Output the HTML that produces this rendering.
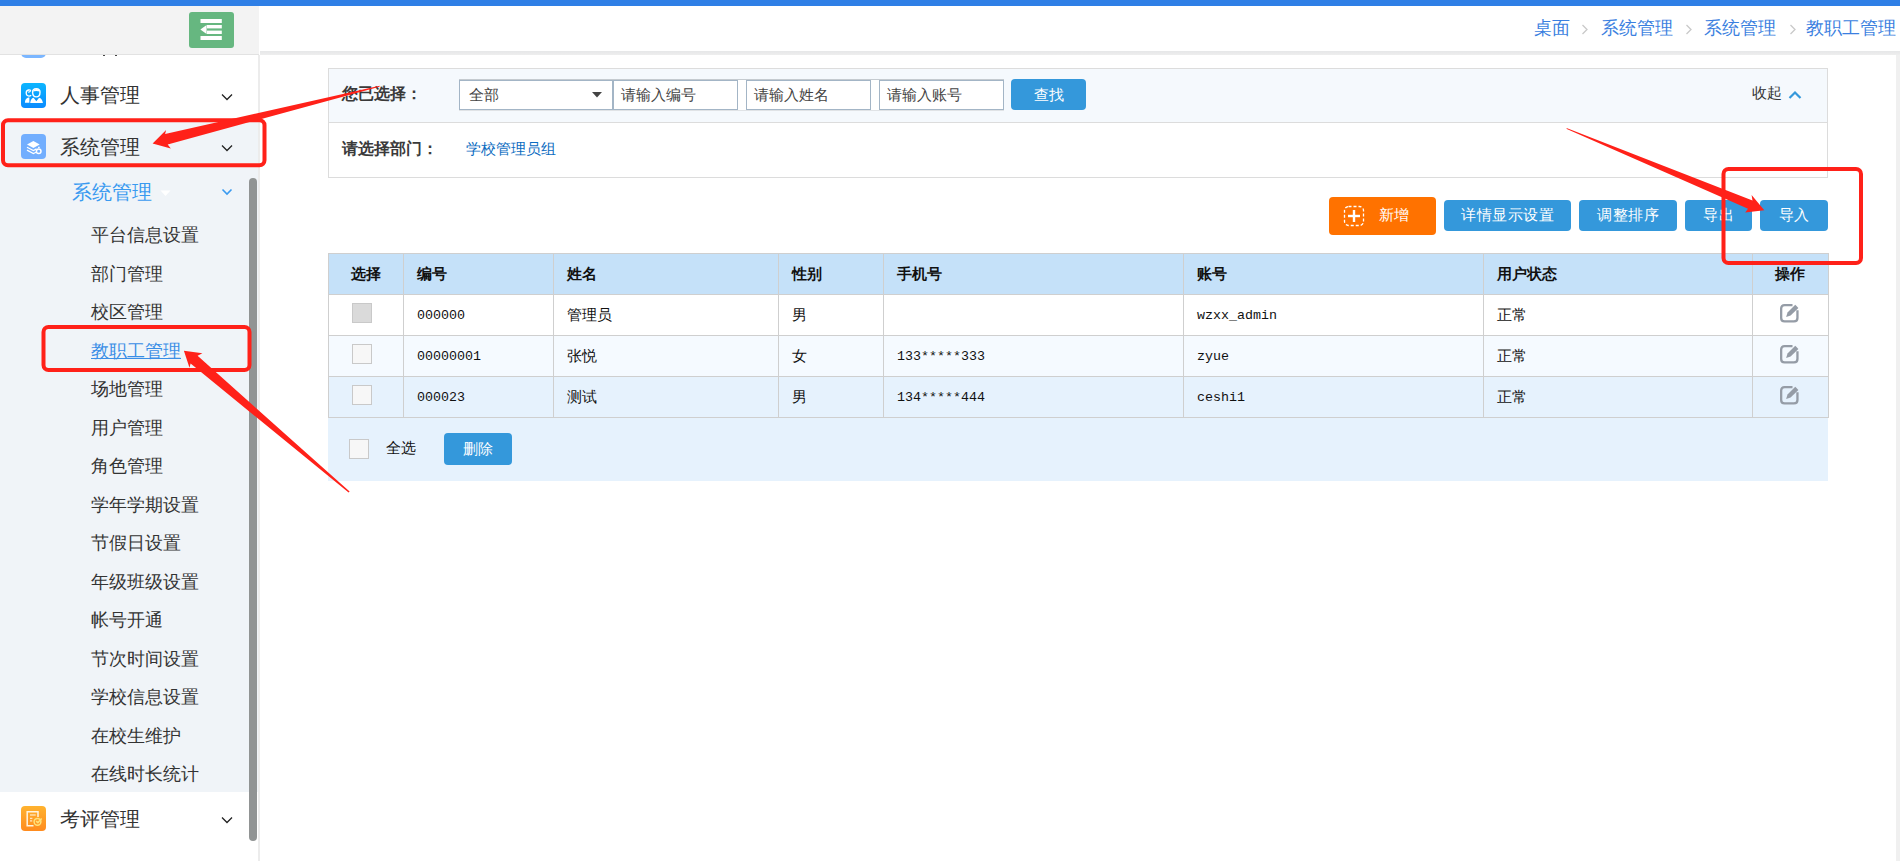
<!DOCTYPE html>
<html><head><meta charset="utf-8">
<style>
*{box-sizing:border-box;margin:0;padding:0}
html,body{width:1900px;height:861px;overflow:hidden;background:#fff;font-family:"Liberation Sans",sans-serif;color:#333}
.a{position:absolute;white-space:nowrap}
#topbar{left:0;top:0;width:1900px;height:6px;background:#2f7fe6}
#sbhead{left:0;top:6px;width:259px;height:49px;background:#f3f3f3;border-bottom:1px solid #e2e2e2}
#greenbtn{left:189px;top:12px;width:45px;height:36px;background:#66b780;border-radius:3px}
#sidebar{left:0;top:55px;width:259px;height:806px;background:#fff;overflow:hidden}
#sbline{left:258px;top:55px;width:2px;height:806px;background:#ececec}
#mainhead{left:260px;top:6px;width:1640px;height:45px;background:#fff}
#mainshadow{left:260px;top:51px;width:1640px;height:4px;background:linear-gradient(#e6e7e8,#eeeeee)}
#rightstrip{left:1896px;top:55px;width:4px;height:806px;background:#f0f0f0}
.crumb{top:16px;font-size:18px;color:#3b7fe0;line-height:24px}
.sep{top:16px;font-size:16px;color:#c8c8c8;line-height:24px}
.icon{width:25px;height:25px;border-radius:5px}
.ptxt{font-size:20px;line-height:26px;color:#333}
.chev{width:12px;height:8px}
.sub{left:91px;font-size:18px;line-height:24px;color:#333}
#filter{left:328px;top:68px;width:1500px;height:110px;border:1px solid #dcdcdc;background:#fff}
#frow1{left:329px;top:69px;width:1498px;height:54px;background:#f5f9fd;border-bottom:1px solid #dcdcdc}
.lbl{font-size:16px;font-weight:bold;color:#3a3a3a;line-height:20px}
.inp{height:30px;background:#fff;border:1px solid #a3b5c6;font-size:15px;color:#444;line-height:28px;padding-left:7px}
.btn{background:#3498db;color:#fff;border-radius:4px;font-size:15px;text-align:center}
#tbl{left:328px;top:253px;width:1500px;border-collapse:collapse;table-layout:fixed;font-size:15px;color:#111}
#tbl td,#tbl th{border:1px solid #cfcfcf;height:41px;padding:0 0 0 13px;text-align:left;white-space:nowrap}
#tbl th{background:#c5e1f9;font-weight:bold}
.mono{font-family:"Liberation Mono",monospace;font-size:13.33px}
.cb{display:inline-block;width:20px;height:20px;border:1px solid #c9c9c9;background:#f7f7f7;vertical-align:middle}
#foot{left:328px;top:418px;width:1500px;height:63px;background:#e6f2fd}
</style></head><body>
<div class="a" id="topbar"></div>
<div class="a" id="sidebar"></div>
<div class="a" style="left:0;top:121px;width:258px;height:671px;background:#f0f4f8"></div>
<div class="a icon" style="left:21px;top:33px;background:#7bb6ff"></div>
<div class="a" style="left:103px;top:53px;width:2px;height:3px;background:#444"></div>
<div class="a" style="left:115px;top:53px;width:2px;height:3px;background:#444"></div>
<div class="a" id="sbhead"></div>
<div class="a" id="greenbtn">
  <svg width="45" height="36" viewBox="0 0 45 36" style="position:absolute;left:0;top:0">
    <rect x="11.5" y="7" width="21.3" height="4" fill="#fff"/>
    <rect x="18" y="13" width="14.8" height="3.4" fill="#fff"/>
    <rect x="18" y="18.6" width="14.8" height="3.4" fill="#fff"/>
    <rect x="11.5" y="24" width="21.3" height="4" fill="#fff"/>
    <polygon points="11.4,17.5 17.6,13 17.6,22" fill="#fff"/>
  </svg>
</div>
<div class="a" id="sbline"></div>
<div class="a" id="mainhead"></div>
<div class="a" id="mainshadow"></div>
<div class="a" id="rightstrip"></div>

<!-- breadcrumb -->
<div class="a crumb" style="left:1534px">桌面</div>
<svg class="a" width="8" height="12" style="left:1581px;top:24px"><polyline points="1.5,1 6,5.5 1.5,10" fill="none" stroke="#c9c9c9" stroke-width="1.3"/></svg>
<div class="a crumb" style="left:1601px">系统管理</div>
<svg class="a" width="8" height="12" style="left:1685px;top:24px"><polyline points="1.5,1 6,5.5 1.5,10" fill="none" stroke="#c9c9c9" stroke-width="1.3"/></svg>
<div class="a crumb" style="left:1704px">系统管理</div>
<svg class="a" width="8" height="12" style="left:1789px;top:24px"><polyline points="1.5,1 6,5.5 1.5,10" fill="none" stroke="#c9c9c9" stroke-width="1.3"/></svg>
<div class="a crumb" style="left:1806px">教职工管理</div>

<!-- sidebar content -->

<div class="a icon" style="left:21px;top:83px;background:linear-gradient(#0cb6ff,#0a8bff);border-radius:4px">
  <svg width="25" height="25" viewBox="0 0 25 25" style="position:absolute;left:0;top:0">
    <path d="M10 7.6 Q8.8 6.8 7.6 7 Q5 7.5 5.2 10.3 Q5.5 13 8 13.1 Q9.3 13.1 10.2 12.3" fill="none" stroke="#fff" stroke-width="1.3"/>
    <path d="M7.2 9 Q8.4 9.4 9.6 8.2" fill="none" stroke="#fff" stroke-width="1.1"/>
    <path d="M11.6 9.2 Q11.3 5.8 15.3 5.8 Q19.2 5.8 19 9.2 Q19 13.8 15.3 13.9 Q11.7 13.8 11.6 9.2 Z" fill="none" stroke="#fff" stroke-width="1.4"/>
    <path d="M11.8 8.6 Q12.5 6 15.3 6 Q18.3 6 18.8 8.6 Q15.3 7.6 11.8 8.6 Z" fill="#fff"/>
    <path d="M3.9 19.8 Q4 15.6 7.3 14.6 L8.4 14.6 L8.4 19.8 Z" fill="#fff"/>
    <path d="M9.2 20 Q9.6 15.4 12.6 14.7 L15.3 18.2 L18.1 14.7 Q21.3 15.4 21.9 20 Z" fill="#fff"/>
  </svg>
</div>
<div class="a ptxt" style="left:60px;top:82px">人事管理</div>
<svg class="a" width="12" height="8" style="left:221px;top:93px"><polyline points="1,1.5 6,6.5 11,1.5" fill="none" stroke="#222" stroke-width="1.3"/></svg>

<div class="a icon" style="left:21px;top:134px;background:#72aefe;border-radius:4px">
  <svg width="25" height="25" viewBox="0 0 25 25" style="position:absolute;left:0;top:0">
    <path d="M6 10.6 L12.4 7 L18.7 10.6 L12.4 14 Z" fill="#fff"/>
    <path d="M6 13.2 L12.4 16.5 L15.5 14.9 M17.1 13.4 L18.7 13.4" fill="none" stroke="#fff" stroke-width="1.2"/>
    <path d="M6 16.1 L12.4 19.5 L15.1 18.3" fill="none" stroke="#fff" stroke-width="1.2"/>
    <circle cx="17.7" cy="17.3" r="2.3" fill="none" stroke="#fff" stroke-width="1.5"/>
  </svg>
</div>
<div class="a ptxt" style="left:60px;top:134px">系统管理</div>
<svg class="a" width="12" height="8" style="left:221px;top:144px"><polyline points="1,1.5 6,6.5 11,1.5" fill="none" stroke="#222" stroke-width="1.3"/></svg>

<div class="a ptxt" style="left:72px;top:179px;color:#3a9af0">系统管理</div>
<svg class="a" width="12" height="7" style="left:160px;top:190px"><polygon points="0.5,0.5 10.5,0.5 5.5,6" fill="#fff"/></svg>
<svg class="a" width="12" height="8" style="left:221px;top:188px"><polyline points="1.5,1.5 6,6 10.5,1.5" fill="none" stroke="#3a9af0" stroke-width="1.6"/></svg>

<div class="a sub" style="top:223px">平台信息设置</div>
<div class="a sub" style="top:262px">部门管理</div>
<div class="a sub" style="top:300px">校区管理</div>
<div class="a sub" style="top:339px;color:#3a8ee6;text-decoration:underline">教职工管理</div>
<div class="a sub" style="top:377px">场地管理</div>
<div class="a sub" style="top:416px">用户管理</div>
<div class="a sub" style="top:454px">角色管理</div>
<div class="a sub" style="top:493px">学年学期设置</div>
<div class="a sub" style="top:531px">节假日设置</div>
<div class="a sub" style="top:570px">年级班级设置</div>
<div class="a sub" style="top:608px">帐号开通</div>
<div class="a sub" style="top:647px">节次时间设置</div>
<div class="a sub" style="top:685px">学校信息设置</div>
<div class="a sub" style="top:724px">在校生维护</div>
<div class="a sub" style="top:762px">在线时长统计</div>

<div class="a icon" style="left:21px;top:806px;background:linear-gradient(#ffb32f,#ff8b1e);border-radius:4px">
  <svg width="25" height="25" viewBox="0 0 25 25" style="position:absolute;left:0;top:0">
    <path d="M12.5 19.7 H6.2 V5.8 H17 V11" fill="none" stroke="#fff4e0" stroke-width="1.5"/>
    <line x1="9" y1="9" x2="14.7" y2="9" stroke="#ffe6c0" stroke-width="1.3"/>
    <line x1="9" y1="12.4" x2="11.4" y2="12.4" stroke="#ffe6c0" stroke-width="1.3"/>
    <line x1="9" y1="14.9" x2="11.2" y2="14.9" stroke="#ffe6c0" stroke-width="1.3"/>
    <circle cx="16.5" cy="15.8" r="3.4" fill="none" stroke="#ffe27a" stroke-width="1.5"/>
    <polyline points="15.1,15.1 16.9,16.6 20.7,12.4" fill="none" stroke="#ffe27a" stroke-width="1.5"/>
  </svg>
</div>
<div class="a ptxt" style="left:60px;top:806px">考评管理</div>
<svg class="a" width="12" height="8" style="left:221px;top:816px"><polyline points="1,1.5 6,6.5 11,1.5" fill="none" stroke="#222" stroke-width="1.3"/></svg>

<div class="a" style="left:249px;top:178px;width:8px;height:663px;background:#919494;border-radius:4px"></div>

<!-- filter -->
<div class="a" id="filter"></div>
<div class="a" id="frow1"></div>
<div class="a lbl" style="left:342px;top:84px">您已选择：</div>
<div class="a" style="left:459px;top:79px;width:545px;height:32px;background:#fff;border-top:1px solid #c5cbd0;border-bottom:1px solid #e0e3e6"></div>
<div class="a inp" style="left:459px;top:80px;width:154px;padding-left:9px;border-left-width:1.5px">全部</div>
<svg class="a" width="10" height="6" style="left:592px;top:92px"><polygon points="0,0 10,0 5,5.5" fill="#444"/></svg>
<div class="a inp" style="left:613px;top:80px;width:125px">请输入编号</div>
<div class="a inp" style="left:746px;top:80px;width:125px">请输入姓名</div>
<div class="a inp" style="left:879px;top:80px;width:125px">请输入账号</div>
<div class="a btn" style="left:1011px;top:79px;width:75px;height:31px;line-height:31px">查找</div>
<div class="a" style="left:1752px;top:83px;font-size:15px;line-height:20px;color:#333">收起</div>
<svg class="a" width="14" height="10" style="left:1788px;top:90px"><polyline points="1.5,8 7,2.5 12.5,8" fill="none" stroke="#3498db" stroke-width="2.2"/></svg>
<div class="a lbl" style="left:342px;top:139px">请选择部门：</div>
<div class="a" style="left:466px;top:139px;font-size:15px;line-height:20px;color:#0b6cc1">学校管理员组</div>

<!-- action buttons -->
<div class="a" style="left:1329px;top:197px;width:107px;height:38px;background:#ff7200;border-radius:4px">
  <svg width="22" height="22" style="position:absolute;left:14px;top:8px"><rect x="1.5" y="1.5" width="19" height="19" rx="4" fill="none" stroke="#fff" stroke-width="1.3" stroke-dasharray="3 2"/><line x1="11" y1="5" x2="11" y2="17" stroke="#fff" stroke-width="2.4"/><line x1="5" y1="11" x2="17" y2="11" stroke="#fff" stroke-width="2.4"/></svg>
  <div class="a" style="left:50px;top:8px;font-size:15px;line-height:20px;color:#fff">新增</div>
</div>
<div class="a btn" style="left:1444px;top:200px;width:127px;height:31px;line-height:30px;font-size:15px;letter-spacing:0.6px;text-indent:0.6px">详情显示设置</div>
<div class="a btn" style="left:1579px;top:200px;width:98px;height:31px;line-height:30px;font-size:15px;letter-spacing:0.6px;text-indent:0.6px">调整排序</div>
<div class="a btn" style="left:1685px;top:200px;width:67px;height:31px;line-height:30px;font-size:15px;letter-spacing:0.6px;text-indent:0.6px">导出</div>
<div class="a btn" style="left:1760px;top:200px;width:68px;height:31px;line-height:30px;font-size:15px;letter-spacing:0.6px;text-indent:0.6px">导入</div>

<!-- table -->
<table class="a" id="tbl">
<colgroup><col style="width:75px"><col style="width:150px"><col style="width:225px"><col style="width:105px"><col style="width:300px"><col style="width:300px"><col style="width:269px"><col style="width:76px"></colgroup>
<tr><th style="padding-left:22px">选择</th><th>编号</th><th>姓名</th><th>性别</th><th>手机号</th><th>账号</th><th>用户状态</th><th style="padding-left:22px">操作</th></tr>
<tr style="background:#fff"><td style="padding-left:23px;padding-bottom:4px"><span class="cb" style="background:#dadada"></span></td><td class="mono">000000</td><td>管理员</td><td>男</td><td></td><td class="mono">wzxx_admin</td><td>正常</td><td style="padding-left:27px;padding-bottom:2px"><svg width="20" height="20" style="vertical-align:middle" class="ed"><use href="#edit"/></svg></td></tr>
<tr style="background:#f5faff"><td style="padding-left:23px;padding-bottom:4px"><span class="cb"></span></td><td class="mono">00000001</td><td>张悦</td><td>女</td><td class="mono">133*****333</td><td class="mono">zyue</td><td>正常</td><td style="padding-left:27px;padding-bottom:2px"><svg width="20" height="20" style="vertical-align:middle"><use href="#edit"/></svg></td></tr>
<tr style="background:#e6f2fd"><td style="padding-left:23px;padding-bottom:4px"><span class="cb"></span></td><td class="mono">000023</td><td>测试</td><td>男</td><td class="mono">134*****444</td><td class="mono">ceshi1</td><td>正常</td><td style="padding-left:27px;padding-bottom:2px"><svg width="20" height="20" style="vertical-align:middle"><use href="#edit"/></svg></td></tr>
</table>
<svg width="0" height="0" style="position:absolute"><defs><g id="edit">
<path d="M12.5 1.15 H4.6 Q1.15 1.15 1.15 4.6 V14 Q1.15 17.45 4.6 17.45 H14 Q17.45 17.45 17.45 14 V6.3" fill="none" stroke="#959ca6" stroke-width="2.3"/>
<path d="M15.27 0.87 L18.4 4 L10.6 11.6 L6.1 12.9 L7.5 8.6 Z" fill="#959ca6"/>
</g></defs></svg>

<div class="a" id="foot"></div>
<span class="a cb" style="left:349px;top:439px"></span>
<div class="a" style="left:386px;top:438px;font-size:15px;line-height:20px;color:#111">全选</div>
<div class="a btn" style="left:444px;top:433px;width:68px;height:32px;line-height:31px;font-size:15px">删除</div>

<!-- annotations -->
<svg class="a" width="1900" height="861" style="left:0;top:0;pointer-events:none">
  <g fill="none" stroke="#ff2119" stroke-width="4">
    <rect x="3" y="120.3" width="261.5" height="45" rx="5"/>
    <rect x="43.5" y="327" width="206" height="43" rx="5"/>
    <rect x="1723.5" y="169" width="137.5" height="94" rx="5"/>
  </g>
  <g fill="#ff2119">
    <polygon points="379.6,85.7 165.1,134 166.1,129.9 152.6,143.4 170.8,148.4 167.7,144.4 379.5,86.7"/>
    <polygon points="349.6,491.5 197.6,355.8 202.4,353.3 183.9,350.7 189.5,367.8 190.6,363.6 348.6,492.6"/>
    <polygon points="1566.5,127.9 1752.5,200.4 1751.6,194.9 1764.3,210.3 1745.2,212.5 1748,208.7 1566.8,128.9"/>
  </g>
</svg>
</body></html>
